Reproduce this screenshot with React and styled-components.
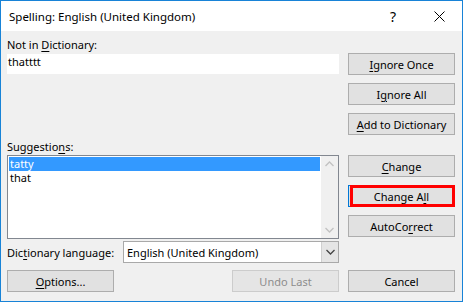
import React from "react";
import styled, { createGlobalStyle } from "styled-components";

const Global = createGlobalStyle`
  html, body { margin: 0; padding: 0; background: #ffffff; }
  body { font-family: "Noto Sans", "Open Sans", sans-serif; font-size: 11px; color: #000; }
  * { box-sizing: border-box; }
`;

const Window = styled.div`
  width: 463px;
  height: 302px;
  border: 1px solid #1883d7;
  background: #f0f0f0;
  display: flex;
  flex-direction: column;
`;

const TitleBar = styled.div`
  height: 30px;
  background: #ffffff;
  display: flex;
  align-items: center;
  padding-left: 8px;
`;

const Title = styled.div`
  flex: 1;
  font-size: 11.5px;
`;

const TitleButton = styled.div`
  width: 46px;
  height: 30px;
  display: flex;
  align-items: center;
  justify-content: center;
  font-size: 14px;
  color: #000;
`;

const Body = styled.div`
  flex: 1;
  display: flex;
  flex-direction: column;
  padding: 6px 7px 8px 6px;
`;

const Top = styled.div`
  display: flex;
  gap: 9px;
`;

const LeftCol = styled.div`
  width: 332px;
  display: flex;
  flex-direction: column;
`;

const RightCol = styled.div`
  width: 107px;
  display: flex;
  flex-direction: column;
  padding-top: 16px;
`;

const Label = styled.div`
  height: 16px;
  line-height: 16px;
  margin-top: ${(p) => p.$mt || 0}px;
  white-space: nowrap;
`;

const U = styled.span`
  text-decoration: underline;
  text-underline-offset: 2px;
  text-decoration-thickness: 1px;
`;

const TextBox = styled.div`
  margin-top: 1px;
  height: 20px;
  background: #fff;
  line-height: 15px;
  padding: 0 1px;
`;

const ListBox = styled.div`
  height: 84px;
  background: #fff;
  border: 1px solid #828790;
  display: flex;
`;

const Items = styled.div`
  flex: 1;
  padding: 1px;
`;

const Item = styled.div`
  height: 14px;
  line-height: 14px;
  padding-left: 1px;
  background: ${(p) => (p.$selected ? "#3399ff" : "transparent")};
  color: ${(p) => (p.$selected ? "#fff" : "#000")};
`;

const ScrollBar = styled.div`
  width: 17px;
  background: #f0f0f0;
  display: flex;
  flex-direction: column;
  justify-content: space-between;
  align-items: center;
  padding: 5px 0;
`;

const LangRow = styled.div`
  margin-top: 2px;
  height: 22px;
  display: flex;
  align-items: center;
`;

const LangLabel = styled.div`
  width: 116px;
  white-space: nowrap;
`;

const Combo = styled.div`
  flex: 1;
  height: 22px;
  border: 1px solid #a9a9a9;
  background: #fff;
  display: flex;
  align-items: center;
`;

const ComboText = styled.div`
  flex: 1;
  padding-left: 3px;
`;

const ComboButton = styled.div`
  width: 17px;
  height: 20px;
  background: #e5e5e5;
  border-left: 1px solid #d0d0d0;
  display: flex;
  align-items: center;
  justify-content: center;
`;

const Button = styled.div`
  position: relative;
  height: 22px;
  width: 107px;
  flex: none;
  background: ${(p) => (p.$disabled ? "#e5e5e5" : "#e1e1e1")};
  border: 1px solid ${(p) => (p.$focused ? "#0078d7" : p.$disabled ? "#cccccc" : "#adadad")};
  color: ${(p) => (p.$disabled ? "#8d8d8d" : "#000")};
  display: flex;
  align-items: center;
  justify-content: center;
  margin-top: ${(p) => p.$mt || 0}px;
  white-space: nowrap;
`;

const Highlight = styled.div`
  position: absolute;
  left: 1px;
  right: -1px;
  top: -1px;
  bottom: -1px;
  border: 3px solid #ff0000;
  pointer-events: none;
`;

const BottomRow = styled.div`
  margin-top: 7px;
  display: flex;
  align-items: center;
`;

const Spacer = styled.div`
  flex: 1;
`;

const Gap = styled.div`
  width: ${(p) => p.$w}px;
`;

const Chevron = ({ up, color = "#c2c2c2" }) => (
  <svg width="9" height="6" viewBox="0 0 9 6">
    <polyline
      points={up ? "0.5,5 4.5,1 8.5,5" : "0.5,1 4.5,5 8.5,1"}
      fill="none"
      stroke={color}
      strokeWidth="1.3"
    />
  </svg>
);

export default function App() {
  return (
    <>
      <Global />
      <Window>
        <TitleBar>
          <Title>Spelling: English (United Kingdom)</Title>
          <TitleButton>?</TitleButton>
          <TitleButton>
            <svg width="11" height="11" viewBox="0 0 11 11">
              <path d="M0.5 0.5 L10.5 10.5 M10.5 0.5 L0.5 10.5" stroke="#000" strokeWidth="1" />
            </svg>
          </TitleButton>
        </TitleBar>
        <Body>
          <Top>
            <LeftCol>
              <Label>
                Not in <U>D</U>ictionary:
              </Label>
              <TextBox>thatttt</TextBox>
              <Label $mt={65}>
                Suggestio<U>n</U>s:
              </Label>
              <ListBox>
                <Items>
                  <Item $selected>tatty</Item>
                  <Item>that</Item>
                </Items>
                <ScrollBar>
                  <Chevron up />
                  <Chevron />
                </ScrollBar>
              </ListBox>
              <LangRow>
                <LangLabel>
                  Dic<U>t</U>ionary language:
                </LangLabel>
                <Combo>
                  <ComboText>English (United Kingdom)</ComboText>
                  <ComboButton>
                    <Chevron color="#444" />
                  </ComboButton>
                </Combo>
              </LangRow>
            </LeftCol>
            <RightCol>
              <Button>
                <span>
                  <U>I</U>gnore Once
                </span>
              </Button>
              <Button $mt={8}>
                <span>
                  I<U>g</U>nore All
                </span>
              </Button>
              <Button $mt={8}>
                <span>
                  <U>A</U>dd to Dictionary
                </span>
              </Button>
              <Button $mt={20}>
                <span>
                  <U>C</U>hange
                </span>
              </Button>
              <Button $mt={8} $focused>
                <span>
                  Change A<U>l</U>l
                </span>
                <Highlight />
              </Button>
              <Button $mt={8}>
                <span>
                  AutoCo<U>r</U>rect
                </span>
              </Button>
            </RightCol>
          </Top>
          <BottomRow>
            <Button>
              <span>
                <U>O</U>ptions...
              </span>
            </Button>
            <Spacer />
            <Button $disabled>Undo Last</Button>
            <Gap $w={9} />
            <Button>Cancel</Button>
          </BottomRow>
        </Body>
      </Window>
    </>
  );
}
